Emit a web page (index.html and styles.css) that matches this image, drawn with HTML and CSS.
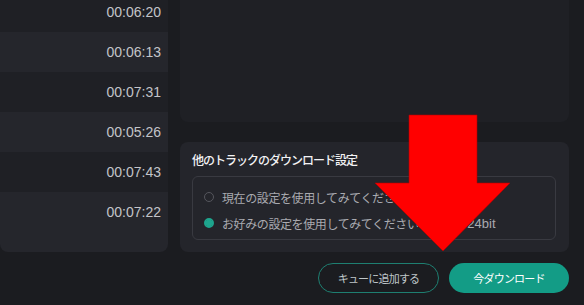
FILE: index.html
```html
<!DOCTYPE html>
<html lang="ja">
<head>
  <meta charset="UTF-8">
  <meta name="viewport" content="width=device-width, initial-scale=1.0">
  <title>ダウンロード設定</title>
  <link rel="stylesheet" href="styles.css">
</head>
<body>

  <div class="app">
    <div class="tracks">
      <div class="track"><span class="time">00:06:20</span></div>
      <div class="track"><span class="time">00:06:13</span></div>
      <div class="track"><span class="time">00:07:31</span></div>
      <div class="track"><span class="time">00:05:26</span></div>
      <div class="track"><span class="time">00:07:43</span></div>
      <div class="track"><span class="time">00:07:22</span></div>
    </div>

    <div class="side">
      <div class="preview"></div>
      <div class="settings">
        <div class="settings-title">他のトラックのダウンロード設定</div>
        <div class="options">
          <label class="option">
            <span class="radio"></span>
            <span class="option-text">現在の設定を使用してみてください</span>
          </label>
          <label class="option">
            <span class="radio checked"></span>
            <span class="option-text">お好みの設定を使用してみてください</span>
            <span class="format">FLAC 24bit</span>
          </label>
        </div>
      </div>
    </div>

    <div class="actions">
      <button class="btn btn-outline">キューに追加する</button>
      <button class="btn btn-primary">今ダウンロード</button>
    </div>
  </div>

  <svg class="arrow" width="584" height="305" viewBox="0 0 584 305">
    <polygon points="409,115 477,115 477,183 510,183 443,251 375,183 409,183" fill="#ff0000" stroke="#b00000" stroke-width="0.6"/>
  </svg>

</body>
</html>
```

FILE: styles.css
```css
body {
  margin: 0;
  padding: 0;
  width: 584px;
  height: 305px;
  overflow: hidden;
  position: relative;
  background-color: #1b1c20;
  font-family: "Noto Sans CJK JP", "Liberation Sans", sans-serif;
  color: #c8c9ce;
}
.app {
  display: grid;
  grid-template-columns: 168px 389px;
  grid-template-rows: 252px auto;
  column-gap: 12px;
}
.tracks {
  height: 252px;
  box-sizing: border-box;
  padding-bottom: 20px;
  display: flex;
  flex-direction: column;
  justify-content: flex-end;
  overflow: hidden;
  border-radius: 0 0 8px 8px;
  background-color: #25262c;
}
.track {
  flex: 0 0 40px;
  display: flex;
  align-items: center;
  justify-content: flex-end;
  padding-right: 7px;
}
.track:nth-child(odd) {
  background-color: #1f2025;
}
.time {
  font-family: "Liberation Sans", Arial, sans-serif;
  font-size: 14px;
  color: #c3c4c9;
}
.side {
  display: flex;
  flex-direction: column;
  gap: 20px;
}
.preview {
  height: 122px;
  border-radius: 0 0 8px 8px;
  background-color: #1f2025;
}
.settings {
  height: 110px;
  box-sizing: border-box;
  padding: 10px 13px 0 12px;
  border-radius: 8px;
  background-color: #24252b;
}
.settings-title {
  font-size: 12px;
  line-height: 16px;
  letter-spacing: -1px;
  color: #f2f2f4;
  font-weight: 500;
  margin-bottom: 8px;
}
.options {
  height: 64px;
  box-sizing: border-box;
  padding: 7px 0 3px 11px;
  border: 1px solid #393a41;
  border-radius: 6px;
}
.option {
  display: flex;
  align-items: center;
  height: 26px;
  font-size: 12px;
  letter-spacing: -0.4px;
  color: #a9aab0;
}
.radio {
  width: 10px;
  height: 10px;
  box-sizing: border-box;
  border: 1px solid #55565d;
  border-radius: 50%;
  margin-right: 8px;
  flex-shrink: 0;
}
.radio.checked {
  border: 2px solid #1ea58e;
  background: radial-gradient(circle, #1ea58e 0 3px, #1b1c20 3.5px);
}
.format {
  margin-left: 12px;
  font-family: "Liberation Sans", Arial, sans-serif;
  font-size: 13px;
  letter-spacing: 0;
  color: #a9aab0;
}
.actions {
  grid-column: 1 / 3;
  display: flex;
  justify-content: flex-end;
  gap: 10px;
  padding-top: 11px;
}
.btn {
  height: 30px;
  border-radius: 15px;
  font-family: "Noto Sans CJK JP", sans-serif;
  font-size: 11px;
  letter-spacing: -0.8px;
  cursor: pointer;
}
.btn-outline {
  width: 121px;
  background: transparent;
  border: 1px solid #1e7f71;
  color: #bfc6c8;
}
.btn-primary {
  width: 120px;
  border: none;
  background-color: #139c86;
  color: #ffffff;
}
.arrow {
  position: absolute;
  left: 0;
  top: 0;
  pointer-events: none;
}
```
